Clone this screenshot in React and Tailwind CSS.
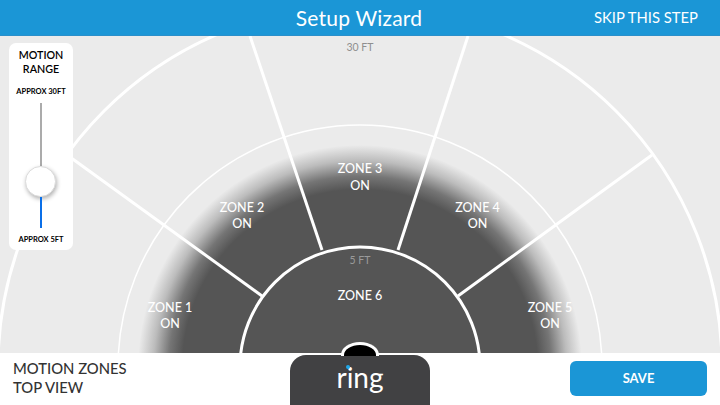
export default function App() {
  const lines = [
    [322, 250, 250, 36],
    [398, 250, 468, 36],
    [262, 296, 63, 152],
    [458, 296, 652, 155],
  ];
  const labels = [
    ["ZONE 1", 170, 307],
    ["ON", 170, 323],
    ["ZONE 2", 242, 207],
    ["ON", 242, 223],
    ["ZONE 3", 360, 168],
    ["ON", 360, 185],
    ["ZONE 4", 477.5, 207],
    ["ON", 477.5, 223],
    ["ZONE 5", 550, 307],
    ["ON", 550, 323],
    ["ZONE 6", 360, 295],
  ];
  return (
    <div className="w-[720px] h-[405px] flex flex-col overflow-hidden bg-white font-['Lato',sans-serif]">
      <header className="h-[36px] shrink-0 bg-[#1b96d6] border-b border-[#2a8fca] grid grid-cols-3 items-center text-white">
        <div />
        <div className="text-center text-[21px] leading-none tracking-[0.2px] -translate-x-px">Setup Wizard</div>
        <div className="text-right pr-[22px] text-[14.8px] leading-none">SKIP THIS STEP</div>
      </header>

      <main className="relative h-[317px] shrink-0 bg-[#ebebeb] overflow-hidden">
        <svg className="absolute inset-0" width="720" height="317" viewBox="0 36 720 317">
          <defs>
            <radialGradient id="blob" gradientUnits="userSpaceOnUse" cx="360" cy="367" r="222">
              <stop offset="0.8" stopColor="#555555" />
              <stop offset="0.86" stopColor="#757575" />
              <stop offset="0.93" stopColor="#bcbcbc" />
              <stop offset="1" stopColor="#ebebeb" />
            </radialGradient>
          </defs>
          <circle cx="360" cy="367" r="222" fill="url(#blob)" />
          <circle cx="360" cy="367" r="362" fill="none" stroke="#fff" strokeWidth="3" />
          <circle cx="360" cy="367" r="242" fill="none" stroke="#fff" strokeWidth="1.5" />
          {lines.map(([a, b, c, d], i) => (
            <line key={i} x1={a} y1={b} x2={c} y2={d} stroke="#fff" strokeWidth="3" />
          ))}
          <circle cx="360" cy="367" r="120" fill="#555555" stroke="#fff" strokeWidth="3" />
          {labels.map(([t, x, y], i) => (
            <text key={i} x={x} y={y} textAnchor="middle" dominantBaseline="central" className="fill-white text-[12.5px] font-medium">
              {t}
            </text>
          ))}
          <text x="360" y="260" textAnchor="middle" dominantBaseline="central" className="fill-[#9a9a9a] text-[10.5px]">5 FT</text>
          <text x="360" y="47" textAnchor="middle" dominantBaseline="central" className="fill-[#8f8f8f] text-[10.5px]">30 FT</text>
        </svg>

        <aside className="absolute left-[9px] top-[7px] w-[64px] h-[207px] bg-white rounded-[7px] flex flex-col items-center text-black">
          <div className="mt-[5px] text-center text-[10.7px] leading-[14px] font-semibold">
            MOTION<br />RANGE
          </div>
          <div className="mt-[11px] text-[7.5px] leading-[10px] font-bold whitespace-nowrap">APPROX 30FT</div>
          <div className="mt-[6px] w-[2px] h-[63px] bg-[#ababab]" />
          <div className="-ml-[2px] w-[31px] h-[31px] rounded-full bg-white border border-[#dcdcdc] shadow-[1px_2px_4px_rgba(0,0,0,0.3)] shrink-0" />
          <div className="w-[2px] h-[31px] bg-[#0a6fe8]" />
          <div className="mt-[7px] text-[7.5px] leading-[10px] font-bold whitespace-nowrap">APPROX 5FT</div>
        </aside>
      </main>

      <footer className="relative flex-1 flex items-stretch">
        <div className="flex-1 pl-[13px] pt-[6px] text-[14.8px] leading-[19px] font-medium text-[#333]">
          MOTION ZONES<br />TOP VIEW
        </div>
        <div className="relative mt-[2px] w-[140px] h-[50px] bg-[#414143] rounded-t-[16px] flex justify-center">
          <div className="absolute left-[51px] top-[-13px] w-[38px] h-[14px] rounded-t-[19px_13px] bg-black border-[3px] border-b-0 border-white" />
          <span className="relative mt-[2px] text-[28px] leading-[40px] text-white">
            ring
            <span className="absolute left-[10px] top-[8px] w-[4px] h-[4px] rounded-full bg-[#1ea7e8]" />
          </span>
        </div>
        <div className="flex-1 flex justify-end items-start pt-[8px] pr-[13px]">
          <button className="w-[137px] h-[35px] rounded-[6px] bg-[#1b96d6] text-white text-[13px] font-bold">SAVE</button>
        </div>
      </footer>
    </div>
  );
}
